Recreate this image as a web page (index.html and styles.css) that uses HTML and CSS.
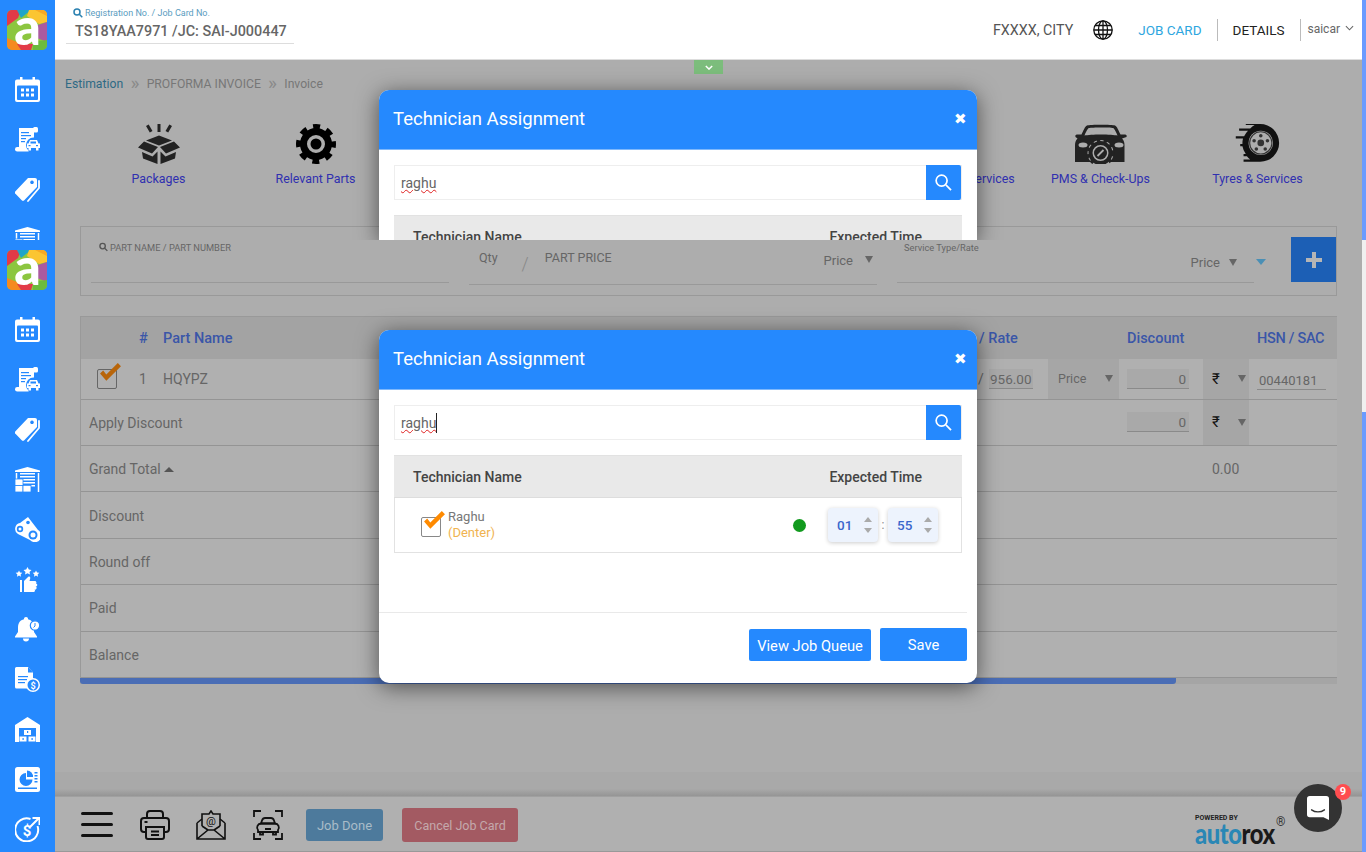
FILE: index.html
```html
<!DOCTYPE html>
<html lang="en">
<head>
    <meta charset="UTF-8">
    <meta name="viewport" content="width=device-width, initial-scale=1.0">
    <title>Job Card - Invoice</title>
    <link rel="stylesheet" href="styles.css">
</head>
<body>
<svg class="icon-defs" aria-hidden="true">
    <defs>
        <clipPath id="logoClip"><rect width="40" height="40" rx="5"/></clipPath>
    </defs>
    <symbol id="i-logo" viewBox="0 0 40 40">
        <g clip-path="url(#logoClip)">
            <rect width="40" height="40" fill="#8cc63f"/>
            <path d="M0 0h14l-3 8-11 8z" fill="#e23b47"/>
            <path d="M10 0h14l-10 8z" fill="#1ea5c9"/>
            <path d="M22 0h18v12l-8 2-12-8z" fill="#fbc531"/>
            <path d="M40 12v20l-10-4-2-12z" fill="#ab5aa0"/>
            <path d="M0 28l10 4 4 8H0z" fill="#f58a1f"/>
            <path d="M10 34h16l-2 6H14z" fill="#e23b47"/>
            <path d="M26 32l14-2v10H26z" fill="#6cbb3c"/>
            <path d="M28 0h12v6z" fill="#f7a823"/>
        </g>
    </symbol>
    <symbol id="i-cal" viewBox="0 0 25 25">
        <path fill="#fff" d="M5 0h2.500v2.500h10V0H20v2.500h3a2 2 0 0 1 2 2V23a2 2 0 0 1-2 2H2a2 2 0 0 1-2-2V4.500a2 2 0 0 1 2-2h3z"/>
        <rect x="2" y="8.500" width="21" height="14.500" rx="1" fill="#2589fe"/>
        <g fill="#fff">
            <rect x="6" y="11.500" width="3" height="3"/><rect x="11" y="11.500" width="3" height="3"/><rect x="16" y="11.500" width="3" height="3"/>
            <rect x="6" y="16.500" width="3" height="3"/><rect x="11" y="16.500" width="3" height="3"/><rect x="16" y="16.500" width="3" height="3"/>
        </g>
    </symbol>
    <symbol id="i-bill" viewBox="0 0 25 25">
        <rect x="4" y="1" width="15" height="20" fill="#fff"/>
        <rect x="18" y="0" width="5" height="5.500" rx="1.500" fill="#fff"/>
        <rect x="0" y="20" width="15" height="4.500" rx="2.200" fill="#fff"/>
        <g fill="#2589fe"><rect x="6" y="5" width="8" height="1.200"/><rect x="6" y="8" width="10" height="1.200"/><rect x="6" y="11" width="5" height="1.200"/><rect x="6" y="14" width="4" height="1.200"/></g>
        <circle cx="18.500" cy="18" r="7.500" fill="#2589fe"/>
        <path fill="#fff" d="M15 13h7l1.500 3.500H25V21h-1.500v2.500h-2.500V21h-5v2.500h-2.500V21H12v-4.500h1.500z"/>
        <rect x="15.500" y="14.500" width="5.500" height="2" fill="#2589fe"/>
        <g fill="#2589fe"><rect x="13.500" y="18" width="2" height="1.200"/><rect x="21" y="18" width="2" height="1.200"/></g>
    </symbol>
    <symbol id="i-tag" viewBox="0 0 25 25">
        <path fill="#fff" d="M13 1h7a2 2 0 0 1 2 2v7L9.500 23a2 2 0 0 1-3 0L.700 17a2 2 0 0 1 0-3zm4 2.500a1.800 1.800 0 1 0 .01 0z" fill-rule="evenodd"/>
        <path fill="none" stroke="#fff" stroke-width="1.800" stroke-linecap="round" d="M24 4v7L13 24"/>
    </symbol>
    <symbol id="i-store" viewBox="0 0 25 25">
        <path fill="#fff" d="M12.500 0L25 3.500V5H0V3.500z"/>
        <path fill="none" stroke="#fff" stroke-width="1.500" d="M1.500 6v19M23.500 6v19"/>
        <g fill="#fff"><rect x="5" y="6" width="15" height="1.500"/><rect x="5" y="9" width="15" height="1.500"/><rect x="5" y="12" width="15" height="1.500"/><rect x="5" y="15" width="15" height="1.500"/><rect x="5" y="18" width="15" height="1.500"/></g>
        <g fill="#fff" stroke="#2589fe" stroke-width=".800"><rect x="0" y="12" width="8" height="6.500"/><rect x="0" y="18.500" width="8" height="6.500"/><rect x="8" y="18.500" width="8" height="6.500"/></g>
    </symbol>
    <symbol id="i-belt" viewBox="0 0 25 25">
        <path fill="#fff" d="M13 0l10 13a6.500 6.500 0 1 1-8 10L3 17a6 6 0 0 1 2-11z"/>
        <circle cx="5" cy="12" r="3.200" fill="#2589fe"/><circle cx="5" cy="12" r="1.500" fill="#fff"/>
        <circle cx="18" cy="18" r="4.500" fill="#2589fe"/><circle cx="18" cy="18" r="2.500" fill="#fff"/>
        <circle cx="13" cy="5.500" r="1.800" fill="#2589fe"/>
    </symbol>
    <symbol id="i-stars" viewBox="0 0 25 25">
        <g fill="#fff">
            <path d="M4 3.500l1 2 2.300.300-1.700 1.600.4 2.300L4 8.600 2 9.700l.4-2.300L.7 5.800 3 5.500z"/>
            <path d="M12.500 0l1.300 2.500 2.700.4-2 2 .5 2.700-2.500-1.300L10 7.600l.5-2.700-2-2 2.700-.4z"/>
            <path d="M21 3.500l1 2 2.300.300-1.700 1.600.4 2.300L21 8.600 19 9.700l.4-2.300-1.700-1.600 2.300-.3z"/>
            <path d="M5 13h2v12H5zM9 14l4-4c1.500-1 2.500 0 2.200 1.500L14.500 14H20a1.500 1.500 0 0 1 1 2.500 1.500 1.500 0 0 1-.5 3 1.500 1.500 0 0 1-1 3 1.500 1.500 0 0 1-1.500 2.500H9z"/>
        </g>
    </symbol>
    <symbol id="i-bell" viewBox="0 0 25 25">
        <path fill="#fff" d="M11 0a2 2 0 0 1 2 2.300c4 1 6 4 6 8V15l3 4.500v1H0v-1L3 15v-4.700c0-4 2-7.300 6-8A2 2 0 0 1 11 0zM8 21.500h6a3 3 0 0 1-6 0z"/>
        <circle cx="20" cy="8.500" r="4.700" fill="#fff" stroke="#2589fe" stroke-width="1.200"/>
        <path fill="none" stroke="#2589fe" stroke-width="1" d="M20 6v3l-1.500 1.500"/>
    </symbol>
    <symbol id="i-docs" viewBox="0 0 25 25">
        <path fill="#fff" d="M1.500 0H13l5 5.500v16H1.500A1.500 1.500 0 0 1 0 20V1.500A1.500 1.500 0 0 1 1.500 0z"/>
        <path fill="#2589fe" d="M13 0v5.500h5z"/>
        <g fill="#2589fe"><rect x="3" y="9" width="10" height="1.200"/><rect x="3" y="12" width="9" height="1.200"/><rect x="3" y="15" width="7" height="1.200"/></g>
        <circle cx="18" cy="18" r="7" fill="#fff"/>
        <circle cx="18" cy="18" r="5.500" fill="#2589fe"/>
    </symbol>
    <symbol id="i-house" viewBox="0 0 25 25">
        <path fill="#fff" d="M12.500 0L25 8v17H0V8z"/>
        <rect x="4" y="11" width="17" height="14" fill="#2589fe"/>
        <g fill="#fff"><rect x="9" y="13" width="7" height="5"/><rect x="4.500" y="19.500" width="7" height="5"/><rect x="13.500" y="19.500" width="7" height="5"/></g>
        <g fill="#2589fe"><rect x="12" y="14" width="1.200" height="2"/><rect x="7.500" y="21" width="1.200" height="2"/><rect x="16.500" y="21" width="1.200" height="2"/></g>
    </symbol>
    <symbol id="i-chart" viewBox="0 0 25 25">
        <rect width="25" height="25" rx="2.500" fill="#fff"/>
        <path fill="#2589fe" d="M11 6a6.500 6.500 0 1 0 6.500 6.500H11z"/>
        <path fill="#2589fe" d="M13 4a6 6 0 0 1 6 6.500h-6z" transform="translate(-1 -.5)"/>
        <g fill="#2589fe"><rect x="19.500" y="5" width="3" height="1.500"/><rect x="19.500" y="8" width="3" height="1.500"/><rect x="19.500" y="11" width="3" height="1.500"/><rect x="19.500" y="14" width="3" height="1.500"/><rect x="3" y="20.500" width="19" height="1.500"/></g>
    </symbol>
    <symbol id="i-money" viewBox="0 0 25 25">
        <path fill="none" stroke="#fff" stroke-width="2" d="M22.500 9A11.500 11.500 0 1 1 15.500 2"/>
        <path fill="none" stroke="#fff" stroke-width="2" d="M15 10L23.500 1.500M17.500 1h7v7"/>
    </symbol>
    <symbol id="i-box" viewBox="0 0 42 40">
        <g fill="#222">
            <rect x="19.500" y="0" width="3" height="8"/>
            <path d="M8 2l2.700-1.400 3.800 6.400-2.700 1.400zM34 2L31.300.6 27.500 7l2.700 1.400z"/>
            <path d="M21 11.500L8 16.500l13 5 13-5z"/>
            <path d="M6 17.500L0 23.500l14 6 6-6.500zM36 17.500l6 6-14 6-6-6.500z"/>
            <path d="M4 28l10.500 4.500 5-5V40L5 34.500zM38 28l-10.500 4.500-5-5V40L37 34.500z"/>
        </g>
    </symbol>
    <symbol id="i-gear" viewBox="0 0 40 40">
        <circle cx="20" cy="20" r="17.500" fill="none" stroke="#000" stroke-width="5" stroke-dasharray="7 6.750" stroke-dashoffset="3.500"/>
        <circle cx="20" cy="20" r="12.500" fill="none" stroke="#000" stroke-width="7"/>
        <circle cx="20" cy="20" r="5.500" fill="#000"/>
    </symbol>
    <symbol id="i-carfix" viewBox="0 0 52 40">
        <path fill="#222" d="M12 1.500C15 .5 37 .5 40 1.500c2 .7 4 6 5.500 9H50c1.500 0 2 1 1.500 2.500L47 14.500c2 2 2.500 4 2.500 7V38H0V21.500c0-3 .5-5 2.500-7L.5 13C0 11.500.5 10.500 2 10.500h4.500C8 7.500 10 2.200 12 1.500zm2 2.500c-1.500.5-3.500 5-4.500 7.500C15 10 37 10 42.500 11.500 41.500 9 39.500 4.500 38 4c-3-.8-21-.8-24 0z" fill-rule="evenodd"/>
        <ellipse cx="8" cy="21" rx="4.500" ry="2.500" fill="#adadad"/>
        <ellipse cx="44" cy="21" rx="4.500" ry="2.500" fill="#adadad"/>
        <circle cx="25.500" cy="29" r="13" fill="#adadad"/>
        <circle cx="25.500" cy="29" r="10" fill="none" stroke="#222" stroke-width="4"/>
        <circle cx="25.500" cy="29" r="12.500" fill="none" stroke="#222" stroke-width="2.500" stroke-dasharray="3.500 3.350"/>
        <circle cx="25.500" cy="29" r="6.500" fill="#222"/>
        <path d="M22.500 32l6-6" stroke="#adadad" stroke-width="1.800"/>
    </symbol>
    <symbol id="i-tyre" viewBox="0 0 42 36">
        <path fill="#111" d="M23 0a17 17 0 0 1 0 34H8v-2h6a17 17 0 0 1-3-3H8v-2h2A17 17 0 0 1 7 20H5v-2h2a17 17 0 0 1 .5-5H1v-2h7.500A17 17 0 0 1 12 6H4V4h10a17 17 0 0 1 4-3H10V0z"/>
        <circle cx="23.500" cy="17" r="11" fill="#adadad"/>
        <circle cx="23.500" cy="17" r="10" fill="none" stroke="#333" stroke-width="1"/>
        <circle cx="23.500" cy="17" r="3" fill="#333"/>
        <g fill="#333"><circle cx="23.500" cy="10.500" r="1.600"/><circle cx="29.500" cy="15" r="1.600"/><circle cx="27.500" cy="22.500" r="1.600"/><circle cx="19.500" cy="22.500" r="1.600"/><circle cx="17.500" cy="15" r="1.600"/></g>
    </symbol>
    <symbol id="i-globe" viewBox="0 0 20 20">
        <g fill="none" stroke="#111" stroke-width="1.300">
            <circle cx="10" cy="10" r="9.200"/>
            <ellipse cx="10" cy="10" rx="4.500" ry="9.200"/>
            <path d="M10 .8v18.400M.8 10h18.400M2 5.500h16M2 14.500h16"/>
        </g>
    </symbol>
    <symbol id="i-printer" viewBox="0 0 30 30">
        <g fill="none" stroke="#111" stroke-width="2">
            <path d="M7 8V4a3 3 0 0 1 3-3h10a3 3 0 0 1 3 3v4"/>
            <path d="M6 22H4a3 3 0 0 1-3-3v-8a3 3 0 0 1 3-3h22a3 3 0 0 1 3 3v8a3 3 0 0 1-3 3h-2"/>
            <path d="M6 17h18v10a2 2 0 0 1-2 2H8a2 2 0 0 1-2-2z"/>
            <path d="M11 21.500h8M11 25h8M4.500 12h3"/>
        </g>
    </symbol>
    <symbol id="i-mail" viewBox="0 0 30 30">
        <g fill="none" stroke="#111" stroke-width="1.600">
            <path d="M1 13v16h28V13M1 29l11-9h6l11 9M1 13l5-4M29 13l-5-4"/>
            <path d="M6 16V4h7l2-3 2 3h7v12"/>
            <path d="M6 16l6 4M24 16l-6 4"/>
        </g>
    </symbol>
    <symbol id="i-scan" viewBox="0 0 30 30">
        <g fill="none" stroke="#111" stroke-width="1.800">
            <path d="M1 7V1h7M22 1h7v6M29 23v6h-7M8 29H1v-6"/>
            <path d="M9 10.500c.5-1.500 1.500-2.500 3-2.500h6c1.500 0 2.500 1 3 2.500l1 3H8z"/>
            <path d="M5 20a4 4 0 0 1 3-6.500h14a4 4 0 0 1 3 6.500v2H5z"/>
            <path d="M7 22v2.500h3V22M20 22v2.500h3V22M12 19h6"/>
        </g>
    </symbol>
</svg>

<div class="app">
    <aside class="sidebar">
        <div class="side-part side-part-top">
            <svg class="side-logo" viewBox="0 0 40 40"><use href="#i-logo"/><text x="20.500" y="35" text-anchor="middle" class="logo-letter">a</text></svg>
            <svg class="side-icon"><use href="#i-cal"/></svg>
            <svg class="side-icon"><use href="#i-bill"/></svg>
            <svg class="side-icon"><use href="#i-tag"/></svg>
            <svg class="side-icon"><use href="#i-store"/></svg>
        </div>
        <div class="side-part">
            <svg class="side-logo" viewBox="0 0 40 40"><use href="#i-logo"/><text x="20.500" y="35" text-anchor="middle" class="logo-letter">a</text></svg>
            <svg class="side-icon"><use href="#i-cal"/></svg>
            <svg class="side-icon"><use href="#i-bill"/></svg>
            <svg class="side-icon"><use href="#i-tag"/></svg>
            <svg class="side-icon"><use href="#i-store"/></svg>
            <svg class="side-icon"><use href="#i-belt"/></svg>
            <svg class="side-icon"><use href="#i-stars"/></svg>
            <svg class="side-icon"><use href="#i-bell"/></svg>
            <svg class="side-icon" viewBox="0 0 25 25"><use href="#i-docs"/><text x="18" y="21.500" text-anchor="middle" class="icon-dollar">$</text></svg>
            <svg class="side-icon"><use href="#i-house"/></svg>
            <svg class="side-icon"><use href="#i-chart"/></svg>
            <svg class="side-icon" viewBox="0 0 25 25"><use href="#i-money"/><text x="12" y="18.500" text-anchor="middle" class="icon-bigdollar">$</text></svg>
        </div>
    </aside>

    <div class="main">
        <header class="topbar">
            <div class="reg-box">
                <div class="reg-label">
                    <svg class="mini-search" viewBox="0 0 10 10"><circle cx="4" cy="4" r="3" /><path d="M6.300 6.300L9.300 9.300"/></svg>
                    Registration No. / Job Card No.
                </div>
                <div class="reg-value">TS18YAA7971 /JC: SAI-J000447</div>
            </div>
            <div class="top-right">
                <span class="city">FXXXX, CITY</span>
                <svg class="globe"><use href="#i-globe"/></svg>
                <a class="top-link top-link-active">JOB CARD</a>
                <span class="top-sep top-sep-a"></span>
                <a class="top-link">DETAILS</a>
                <span class="top-sep top-sep-b"></span>
                <span class="user">saicar</span>
                <svg class="user-chev" viewBox="0 0 10 6"><path d="M1 1l4 4 4-4"/></svg>
            </div>
        </header>

        <div class="pull-tab"><svg viewBox="0 0 10 6"><path d="M1 1l4 4 4-4"/></svg></div>

        <div class="content">
            <nav class="crumbs">
                <span class="crumb-first">Estimation</span>
                <span class="crumb-sep">&raquo;</span>
                <span>PROFORMA INVOICE</span>
                <span class="crumb-sep">&raquo;</span>
                <span>Invoice</span>
            </nav>

            <div class="cats">
                <div class="cat"><svg class="cat-icon"><use href="#i-box"/></svg><span>Packages</span></div>
                <div class="cat"><svg class="cat-icon"><use href="#i-gear"/></svg><span>Relevant Parts</span></div>
                <div class="cat"></div>
                <div class="cat"></div>
                <div class="cat"></div>
                <div class="cat"><div class="cat-icon"></div><span class="cat-under">Denting &amp; Paint Services</span></div>
                <div class="cat"><svg class="cat-icon"><use href="#i-carfix"/></svg><span>PMS &amp; Check-Ups</span></div>
                <div class="cat"><svg class="cat-icon"><use href="#i-tyre"/></svg><span>Tyres &amp; Services</span></div>
            </div>

            <div class="add-panel">
                <div class="field field-part">
                    <svg class="part-search" viewBox="0 0 10 10"><circle cx="4" cy="4" r="3"/><path d="M6.300 6.300L9.300 9.300"/></svg>
                    PART NAME / PART NUMBER
                </div>
                <div class="field field-price">
                    <span>Qty</span>
                    <span class="slash">/</span>
                    <span>PART PRICE</span>
                    <span class="price-pick">Price <i class="tri"></i></span>
                </div>
                <div class="field field-service">
                    <div class="service-label">Service Type/Rate</div>
                    <div class="service-pick">Price <i class="tri"></i></div>
                </div>
                <i class="tri-blue"></i>
                <button class="add-btn"><svg viewBox="0 0 16 16"><path d="M6 0h4v6h6v4h-6v6H6v-6H0V6h6z"/></svg></button>
            </div>

            <div class="parts">
                <div class="row row-head">
                    <span></span>
                    <span>#</span>
                    <span>Part Name</span>
                    <span class="rate-head">/ Rate</span>
                    <span></span>
                    <span></span>
                    <span>Discount</span>
                    <span></span>
                    <span></span>
                    <span></span>
                    <span class="hsn-head">HSN / SAC</span>
                </div>
                <div class="row row-first">
                    <span class="check-cell"><span class="check check-dim"><svg viewBox="0 0 22 18"><path d="M1 10l3-3 3 4L18 0l3 3L7 17z"/></svg></span></span>
                    <span>1</span>
                    <span>HQYPZ</span>
                    <span class="rate-cell">/<b class="line-input">956.00</b></span>
                    <span class="pick-cell">Price <i class="tri"></i></span>
                    <span></span>
                    <span class="num-input">0</span>
                    <span></span>
                    <span class="pick-cell rupee-cell">&#8377; <i class="tri"></i></span>
                    <span></span>
                    <span class="line-input hsn">00440181</span>
                </div>
                <div class="row">
                    <span class="row-label">Apply Discount</span>
                    <span></span>
                    <span></span>
                    <span></span>
                    <span class="num-input">0</span>
                    <span></span>
                    <span class="pick-cell rupee-cell">&#8377; <i class="tri"></i></span>
                </div>
                <div class="row">
                    <span class="row-label">Grand Total <i class="tri-up"></i></span>
                    <span></span>
                    <span></span>
                    <span></span>
                    <span></span>
                    <span></span>
                    <span class="grand-val">0.00</span>
                </div>
                <div class="row"><span class="row-label">Discount</span></div>
                <div class="row"><span class="row-label">Round off</span></div>
                <div class="row"><span class="row-label">Paid</span></div>
                <div class="row"><span class="row-label">Balance</span></div>
                <div class="hscroll"><div class="hscroll-thumb"></div></div>
            </div>
        </div>

        <div class="foot-band"></div>
        <footer class="footer">
            <div class="burger"><span></span><span></span><span></span></div>
            <svg class="foot-icon"><use href="#i-printer"/></svg>
            <svg class="foot-icon" viewBox="0 0 30 30"><use href="#i-mail"/><text x="15" y="15" text-anchor="middle" class="icon-at">@</text></svg>
            <svg class="foot-icon foot-icon-scan"><use href="#i-scan"/></svg>
            <button class="btn-done">Job Done</button>
            <button class="btn-cancel">Cancel Job Card</button>
            <div class="powered">
                <div class="powered-by">POWERED BY</div>
                <div class="powered-name"><span class="auto">auto</span>rox</div>
                <span class="powered-mark">&reg;</span>
            </div>
        </footer>
    </div>

    <div class="page-scroll">
        <div class="scroll-a"></div>
        <div class="scroll-b"></div>
        <div class="scroll-c"></div>
    </div>

    <!-- modal drawn twice, upper one is cut off at the capture seam -->
    <section class="modal modal-cut">
        <div class="modal-head"><span>Technician Assignment</span><span class="modal-x">&#10006;</span></div>
        <div class="modal-body">
            <div class="m-search">
                <div class="m-input"><span class="typo">raghu</span></div>
                <div class="m-search-btn"><svg viewBox="0 0 18 18"><circle cx="7" cy="7" r="5.800"/><path d="M11.500 11.500L17 17"/></svg></div>
            </div>
            <div class="m-thead"><span>Technician Name</span><span>Expected Time</span></div>
        </div>
    </section>

    <section class="modal modal-full">
        <div class="modal-head"><span>Technician Assignment</span><span class="modal-x">&#10006;</span></div>
        <div class="modal-body">
            <div class="m-search">
                <div class="m-input"><span class="typo">raghu</span><span class="text-caret"></span></div>
                <div class="m-search-btn"><svg viewBox="0 0 18 18"><circle cx="7" cy="7" r="5.800"/><path d="M11.500 11.500L17 17"/></svg></div>
            </div>
            <div class="m-table">
                <div class="m-thead"><span>Technician Name</span><span>Expected Time</span></div>
                <div class="m-row">
                    <span class="check"><svg viewBox="0 0 22 18"><path d="M1 10l3-3 3 4L18 0l3 3L7 17z"/></svg></span>
                    <div class="tech">
                        <div class="tech-name">Raghu</div>
                        <div class="tech-role">(Denter)</div>
                    </div>
                    <span class="dot"></span>
                    <div class="spin"><b>01</b><span class="spin-arrows"><i></i><i></i></span></div>
                    <span class="colon">:</span>
                    <div class="spin"><b>55</b><span class="spin-arrows"><i></i><i></i></span></div>
                </div>
            </div>
        </div>
        <div class="modal-foot">
            <button class="m-btn m-btn-queue">View Job Queue</button>
            <button class="m-btn m-btn-save">Save</button>
        </div>
    </section>

    <div class="chat">
        <svg viewBox="0 0 24 26"><path d="M3 0h18a3 3 0 0 1 3 3v23l-6-3H3a3 3 0 0 1-3-3V3a3 3 0 0 1 3-3z" fill="#fff"/><path d="M5 15c4 3 10 3 14 0" fill="none" stroke="#333" stroke-width="1.500" stroke-linecap="round"/></svg>
        <span class="chat-badge">9</span>
    </div>
</div>
</body>
</html>
```

FILE: styles.css
```css
* {
    box-sizing: border-box;
}
html, body {
    margin: 0;
    padding: 0;
    height: 100%;
    overflow: hidden;
}
body {
    font-family: Roboto, "Liberation Sans", sans-serif;
    font-size: 14px;
    color: #666;
    background-color: #adadad;
}
button {
    font-family: inherit;
    border: none;
    padding: 0;
}
.icon-defs {
    position: absolute;
    width: 0;
    height: 0;
}
.logo-letter {
    font-family: Lato, sans-serif;
    font-weight: 900;
    font-size: 52px;
    fill: #fff;
}
.icon-dollar {
    font-size: 9px;
    font-weight: 700;
    fill: #fff;
}
.icon-bigdollar {
    font-size: 15px;
    font-weight: 700;
    fill: #fff;
}
.icon-at {
    font-size: 11px;
    fill: #111;
}

.app {
    position: relative;
    display: flex;
    width: 1366px;
    height: 852px;
    overflow: hidden;
}

/* sidebar */
.sidebar {
    width: 55px;
    flex-shrink: 0;
    background-color: #2589fe;
}
.side-part {
    display: flex;
    flex-direction: column;
    align-items: center;
    padding-top: 10px;
    padding-right: 1px;
}
.side-part-top {
    height: 240px;
    overflow: hidden;
}
.side-logo {
    width: 40px;
    height: 40px;
    margin-bottom: 27px;
    flex-shrink: 0;
}
.side-icon {
    width: 25px;
    height: 25px;
    margin-bottom: 25px;
    flex-shrink: 0;
}

/* main column */
.main {
    position: relative;
    flex: 1;
    display: flex;
    flex-direction: column;
    min-width: 0;
}
.topbar {
    height: 60px;
    display: flex;
    justify-content: space-between;
    background-color: #fff;
    border-bottom: 1px solid #ddd;
}
.reg-box {
    margin-left: 11px;
    width: 228px;
    height: 44px;
    padding-top: 7px;
    border-bottom: 1px solid #ddd;
}
.reg-label {
    display: flex;
    align-items: center;
    gap: 2px;
    padding-left: 7px;
    font-size: 9px;
    line-height: 12px;
    color: #5a9cc0;
}
.mini-search {
    width: 10px;
    height: 10px;
    fill: none;
    stroke: #2a80b0;
    stroke-width: 1.500;
}
.reg-value {
    margin-top: 3px;
    padding-left: 9px;
    font-size: 14.400px;
    line-height: 20px;
    font-weight: 500;
    color: #666;
    white-space: nowrap;
}
.top-right {
    display: flex;
    align-items: center;
    padding-right: 8px;
    height: 60px;
}
.city {
    font-size: 14.300px;
    color: #555;
}
.globe {
    width: 20px;
    height: 20px;
    margin-left: 20px;
    margin-right: 25px;
}
.top-link {
    font-size: 13.500px;
    color: #222;
}
.top-link-active {
    color: #2ea6e0;
}
.top-sep {
    width: 1px;
    height: 22px;
    background-color: #bbb;
}
.top-sep-a {
    margin: 0 15px;
}
.top-sep-b {
    margin: 0 6px 0 16px;
}
.user {
    font-size: 12px;
    color: #666;
    margin-top: -2px;
}
.user-chev {
    width: 9px;
    height: 6px;
    margin-left: 5px;
    margin-top: -4px;
    fill: none;
    stroke: #666;
    stroke-width: 1.200;
}
.pull-tab {
    position: absolute;
    left: 639px;
    top: 60px;
    width: 29px;
    height: 14px;
    display: flex;
    align-items: center;
    justify-content: center;
    background-color: #7cbd7c;
}
.pull-tab svg {
    width: 8px;
    height: 5px;
    fill: none;
    stroke: #fff;
    stroke-width: 1.800;
}

.content {
    flex: 1;
    display: flex;
    flex-direction: column;
}
.crumbs {
    display: flex;
    margin: 16px 0 0 10px;
    height: 16px;
    font-size: 12.200px;
    line-height: 16px;
    color: #777;
}
.crumb-first {
    color: #2f6a85;
}
.crumb-sep {
    width: 23.500px;
    text-align: center;
    font-size: 19px;
    line-height: 13px;
    color: #8a8a8a;
}

/* category icons */
.cats {
    display: flex;
    margin: 32px 0 0 25px;
    height: 62px;
}
.cat {
    width: 157px;
    display: flex;
    flex-direction: column;
    align-items: center;
    font-size: 12.400px;
    line-height: 16px;
    color: #3030b0;
    white-space: nowrap;
}
.cat-icon {
    width: 52px;
    height: 40px;
    margin-bottom: 7px;
    flex-shrink: 0;
}
.cat-under {
    margin-right: -8px;
}

/* add part form */
.add-panel {
    display: flex;
    align-items: flex-start;
    margin: 40px 0 0 25px;
    width: 1257px;
    height: 70px;
    border: 1px solid #999;
    font-size: 12.500px;
    color: #666;
}
.field {
    border-bottom: 1px solid #999;
}
.field-part {
    display: flex;
    align-items: flex-start;
    gap: 2px;
    margin-left: 10px;
    width: 358px;
    height: 56px;
    padding: 15px 0 0 8px;
    font-size: 9.300px;
    line-height: 12px;
}
.part-search {
    width: 9px;
    height: 10px;
    fill: none;
    stroke: #555;
    stroke-width: 1.500;
}
.field-price {
    display: flex;
    align-items: flex-start;
    margin-left: 20px;
    width: 408px;
    height: 58px;
    padding: 23px 0 0 10px;
    line-height: 16px;
}
.slash {
    margin: 6px 16px 0 24px;
    font-size: 18px;
    font-weight: 300;
    color: #888;
}
.price-pick {
    display: flex;
    align-items: center;
    margin-top: 3px;
    margin-left: auto;
    margin-right: 4px;
    font-size: 13px;
}
.tri {
    display: inline-block;
    width: 0;
    height: 0;
    margin-left: 10px;
    margin-bottom: 3px;
    border-left: 4.500px solid transparent;
    border-right: 4.500px solid transparent;
    border-top: 7px solid #666;
}
.price-pick .tri {
    margin-left: 12px;
}
.field-service {
    margin-left: 20px;
    width: 357px;
    height: 56px;
    padding: 15px 17px 0 7px;
}
.service-label {
    font-size: 9.300px;
    line-height: 12px;
}
.service-pick {
    display: flex;
    align-items: center;
    justify-content: flex-end;
    margin-top: 1px;
    font-size: 13px;
    line-height: 16px;
}
.service-pick .tri {
    margin-left: 9px;
    margin-bottom: 1px;
}
.tri-blue {
    width: 0;
    height: 0;
    margin: 32px 0 0 2px;
    border-left: 5.500px solid transparent;
    border-right: 5.500px solid transparent;
    border-top: 6px solid #4a8fb5;
}
.add-btn {
    display: flex;
    align-items: center;
    justify-content: center;
    margin: 10px 0 0 auto;
    width: 45px;
    height: 45px;
    background-color: #1c5fb5;
}
.add-btn svg {
    width: 16px;
    height: 16px;
    fill: #b5b5b5;
}

/* parts table */
.parts {
    margin: 20px 0 0 25px;
    width: 1257px;
    border-left: 1px solid #999;
    font-size: 14px;
    background-color: #b0b0b0;
}
.row {
    display: grid;
    grid-template-columns: 58px 24px 815px 70px 71px 8px 62px 14px 46px 8px 80px;
    align-items: center;
    height: 46.400px;
    border-bottom: 1px solid #949494;
}
.row-head {
    height: 43px;
    border-top: 1px solid #999;
    border-bottom: none;
    background-color: #a3a3a3;
    font-size: 14.500px;
    font-weight: 500;
    color: #3a56a8;
}
.row-first {
    height: 40.600px;
}
.row > span {
    min-width: 0;
    white-space: nowrap;
}
.rate-head {
    margin-left: 1px;
}
.hsn-head {
    letter-spacing: -.3px;
}
.row-label {
    grid-column: 1 / span 3;
    padding: 1px 0 0 8px;
}
.check-cell {
    padding-left: 16px;
    display: flex;
}
.check {
    position: relative;
    display: block;
    width: 20px;
    height: 20px;
    border: 1px solid #888;
    border-radius: 2px;
    background-color: #fff;
}
.check svg {
    position: absolute;
    left: 1px;
    top: -7px;
    width: 23px;
    height: 19px;
    fill: #ff8a00;
}
.check-dim {
    border-color: #666;
    background-color: transparent;
}
.check-dim svg {
    fill: #b8650a;
}
.line-input {
    display: inline-block;
    margin-left: 5px;
    width: 44px;
    height: 20px;
    font-weight: 400;
    line-height: 21px;
    font-size: 13.500px;
    text-align: center;
    background-color: #a9a9a9;
    border-bottom: 1px solid #8a8a8a;
}
.pick-cell {
    display: flex;
    align-items: center;
    justify-content: space-between;
    align-self: stretch;
    padding: 0 6px 0 10px;
    font-size: 12.500px;
    background-color: #a6a6a6;
}
.pick-cell .tri {
    margin: 0;
}
.rupee-cell {
    color: #111;
    padding-left: 9px;
    padding-right: 3px;
    font-size: 15px;
}
.num-input {
    height: 20px;
    padding-right: 3px;
    font-size: 13.500px;
    line-height: 20px;
    text-align: right;
    background-color: #a9a9a9;
    border-bottom: 1px solid #8a8a8a;
}
.hsn {
    margin-left: 0;
    margin-top: 2px;
    width: 69px;
    padding-left: 2px;
    text-align: left;
    font-size: 13px;
    background-color: #b0b0b0;
}
.tri-up {
    display: inline-block;
    width: 0;
    height: 0;
    margin-bottom: 2px;
    border-left: 5px solid transparent;
    border-right: 5px solid transparent;
    border-bottom: 5px solid #555;
}
.grand-val {
    grid-column: 9 / span 2;
    padding-left: 9px;
}
.hscroll {
    height: 6px;
    margin-left: -1px;
    background-color: #a5a5a5;
}
.hscroll-thumb {
    width: 1096px;
    height: 6px;
    border-radius: 0 0 3px 3px;
    background-color: #4a6db5;
}

/* footer */
.foot-band {
    height: 24px;
    background: linear-gradient(#a9a9a9 70%, #959595);
}
.footer {
    display: flex;
    align-items: center;
    height: 56px;
    padding-left: 26px;
    background-color: #b0b0b0;
    border-top: 1px solid #a0a0a0;
    border-bottom: 1px solid #999;
}
.burger {
    display: flex;
    flex-direction: column;
    gap: 8px;
    width: 32px;
}
.burger span {
    height: 3px;
    border-radius: 2px;
    background-color: #111;
}
.foot-icon {
    width: 30px;
    height: 30px;
    margin-left: 26px;
    margin-top: 2px;
}
.burger + .foot-icon, .foot-icon-scan {
    margin-left: 27px;
}
.btn-done, .btn-cancel {
    border-radius: 3px;
    margin-top: 2px;
}
.btn-done {
    margin-left: 23px;
    width: 77px;
    height: 32px;
    font-size: 13px;
    color: #a9bcc8;
    background-color: #4d7a9c;
}
.btn-cancel {
    margin-left: 19px;
    width: 116px;
    height: 34px;
    font-size: 12.500px;
    color: #c4a9ac;
    background-color: #a35a62;
}
.powered {
    position: relative;
    margin-left: auto;
    margin-right: 77px;
    margin-top: 14px;
    width: 90px;
    height: 34px;
}
.powered-by {
    font-size: 7px;
    line-height: 8px;
    font-weight: 700;
    color: #222;
}
.powered-name {
    font-family: Lato, sans-serif;
    font-size: 28px;
    line-height: 22px;
    font-weight: 900;
    letter-spacing: -.5px;
    color: #1a1a1a;
    transform: scaleX(.85);
    transform-origin: left;
}
.powered-name .auto {
    color: #2a87b5;
}
.powered-mark {
    position: absolute;
    left: 81px;
    top: 1px;
    font-size: 12px;
    line-height: 14px;
    color: #333;
}

/* page scrollbar */
.page-scroll {
    width: 4px;
    flex-shrink: 0;
    display: flex;
    flex-direction: column;
}
.scroll-a {
    height: 240px;
    background-color: #6b9bff;
}
.scroll-b {
    height: 172px;
    background-color: #f0f0f0;
}
.scroll-c {
    flex: 1;
    background-color: #6b9bff;
}

/* technician modal */
.modal {
    position: absolute;
    left: 379px;
    width: 598px;
    background-color: #fff;
    border-radius: 10px;
    box-shadow: 0 4px 22px rgba(0, 0, 0, .55);
    overflow: hidden;
}
.modal-cut {
    top: 90px;
    height: 150px;
    border-radius: 10px 10px 0 0;
    clip-path: inset(-30px -30px 0 -30px);
}
.modal-full {
    top: 330px;
    height: 353px;
}
.modal-head {
    display: flex;
    align-items: center;
    justify-content: space-between;
    height: 60px;
    padding: 0 10px 1px 14px;
    font-size: 18.500px;
    color: #fff;
    background-color: #2589fe;
    border-bottom: 1px solid #7fb8fb;
}
.modal-x {
    font-size: 15px;
}
.modal-body {
    padding: 15px 15px 0 15px;
}
.m-search {
    display: flex;
    height: 35px;
    border: 1px solid #eee;
}
.m-input {
    flex: 1;
    display: flex;
    align-items: center;
    padding: 1px 0 0 6px;
    font-size: 14px;
    color: #666;
}
.typo {
    text-decoration: underline wavy #e02020;
    text-decoration-thickness: 1px;
}
.text-caret {
    width: 1px;
    height: 20px;
    background-color: #222;
}
.m-search-btn {
    display: flex;
    align-items: center;
    justify-content: center;
    width: 35px;
    margin: -1px 0;
    border-radius: 0 2px 2px 0;
    background-color: #2589fe;
}
.m-search-btn svg {
    width: 17px;
    height: 17px;
    fill: none;
    stroke: #fff;
    stroke-width: 1.800;
}
.m-table {
    margin-top: 15px;
    border: 1px solid #e2e2e2;
    border-top: none;
}
.m-thead {
    display: flex;
    justify-content: space-between;
    align-items: center;
    height: 43px;
    padding: 0 40px 0 19px;
    font-size: 14px;
    font-weight: 500;
    color: #444;
    background-color: #e9e9e9;
    border-top: 1px solid #e2e2e2;
    border-bottom: 1px solid #ddd;
}
.modal-cut .m-thead {
    margin-top: 15px;
}
.m-table .m-thead {
    margin: 0 -1px;
}
.m-row {
    display: flex;
    align-items: center;
    height: 54px;
    padding-left: 26px;
}
.m-row .check {
    flex-shrink: 0;
    margin-top: 3px;
}
.tech {
    margin-left: 7px;
    font-size: 13px;
    line-height: 16px;
}
.tech-name {
    color: #777;
}
.tech-role {
    color: #f0b350;
}
.dot {
    width: 13px;
    height: 13px;
    margin-left: auto;
    margin-right: 22px;
    border-radius: 50%;
    background-color: #129a1e;
}
.spin {
    display: flex;
    align-items: center;
    justify-content: space-between;
    flex-shrink: 0;
    width: 50px;
    height: 34px;
    padding: 0 6px 0 9px;
    border-radius: 4px;
    font-size: 13.500px;
    color: #3a66cc;
    background-color: #edf3fd;
    box-shadow: 0 1px 4px rgba(0, 0, 0, .2);
}
.spin b {
    font-weight: 500;
}
.spin-arrows {
    display: flex;
    flex-direction: column;
    gap: 6px;
}
.spin-arrows i {
    width: 0;
    height: 0;
    border-left: 4px solid transparent;
    border-right: 4px solid transparent;
    border-bottom: 5px solid #aaa;
}
.spin-arrows i + i {
    border-bottom: none;
    border-top: 5px solid #aaa;
}
.colon {
    width: 10px;
    flex-shrink: 0;
    text-align: center;
    font-size: 12px;
    color: #888;
}
.m-row .spin:last-child {
    margin-right: 23px;
}
.modal-foot {
    display: flex;
    justify-content: flex-end;
    align-items: flex-start;
    gap: 9px;
    margin: 59px 10px 0 0;
    padding-top: 15px;
    border-top: 1px solid #e9e9e9;
}
.m-btn {
    height: 33px;
    padding-top: 1px;
    font-size: 14.700px;
    border-radius: 2px;
    color: #fff;
    background-color: #2589fe;
}
.m-btn-queue {
    width: 122px;
    margin-top: 1px;
    height: 32px;
}
.m-btn-save {
    width: 87px;
}

/* chat launcher */
.chat {
    position: absolute;
    left: 1294px;
    top: 784px;
    width: 48px;
    height: 48px;
    display: flex;
    align-items: center;
    justify-content: center;
    border-radius: 50%;
    background-color: #333;
}
.chat svg {
    width: 22px;
    height: 24px;
}
.chat-badge {
    position: absolute;
    left: 41px;
    top: 0;
    width: 16px;
    height: 16px;
    border-radius: 50%;
    font-size: 11px;
    font-weight: 700;
    line-height: 16px;
    text-align: center;
    color: #fff;
    background-color: #ff4d4f;
}
```
